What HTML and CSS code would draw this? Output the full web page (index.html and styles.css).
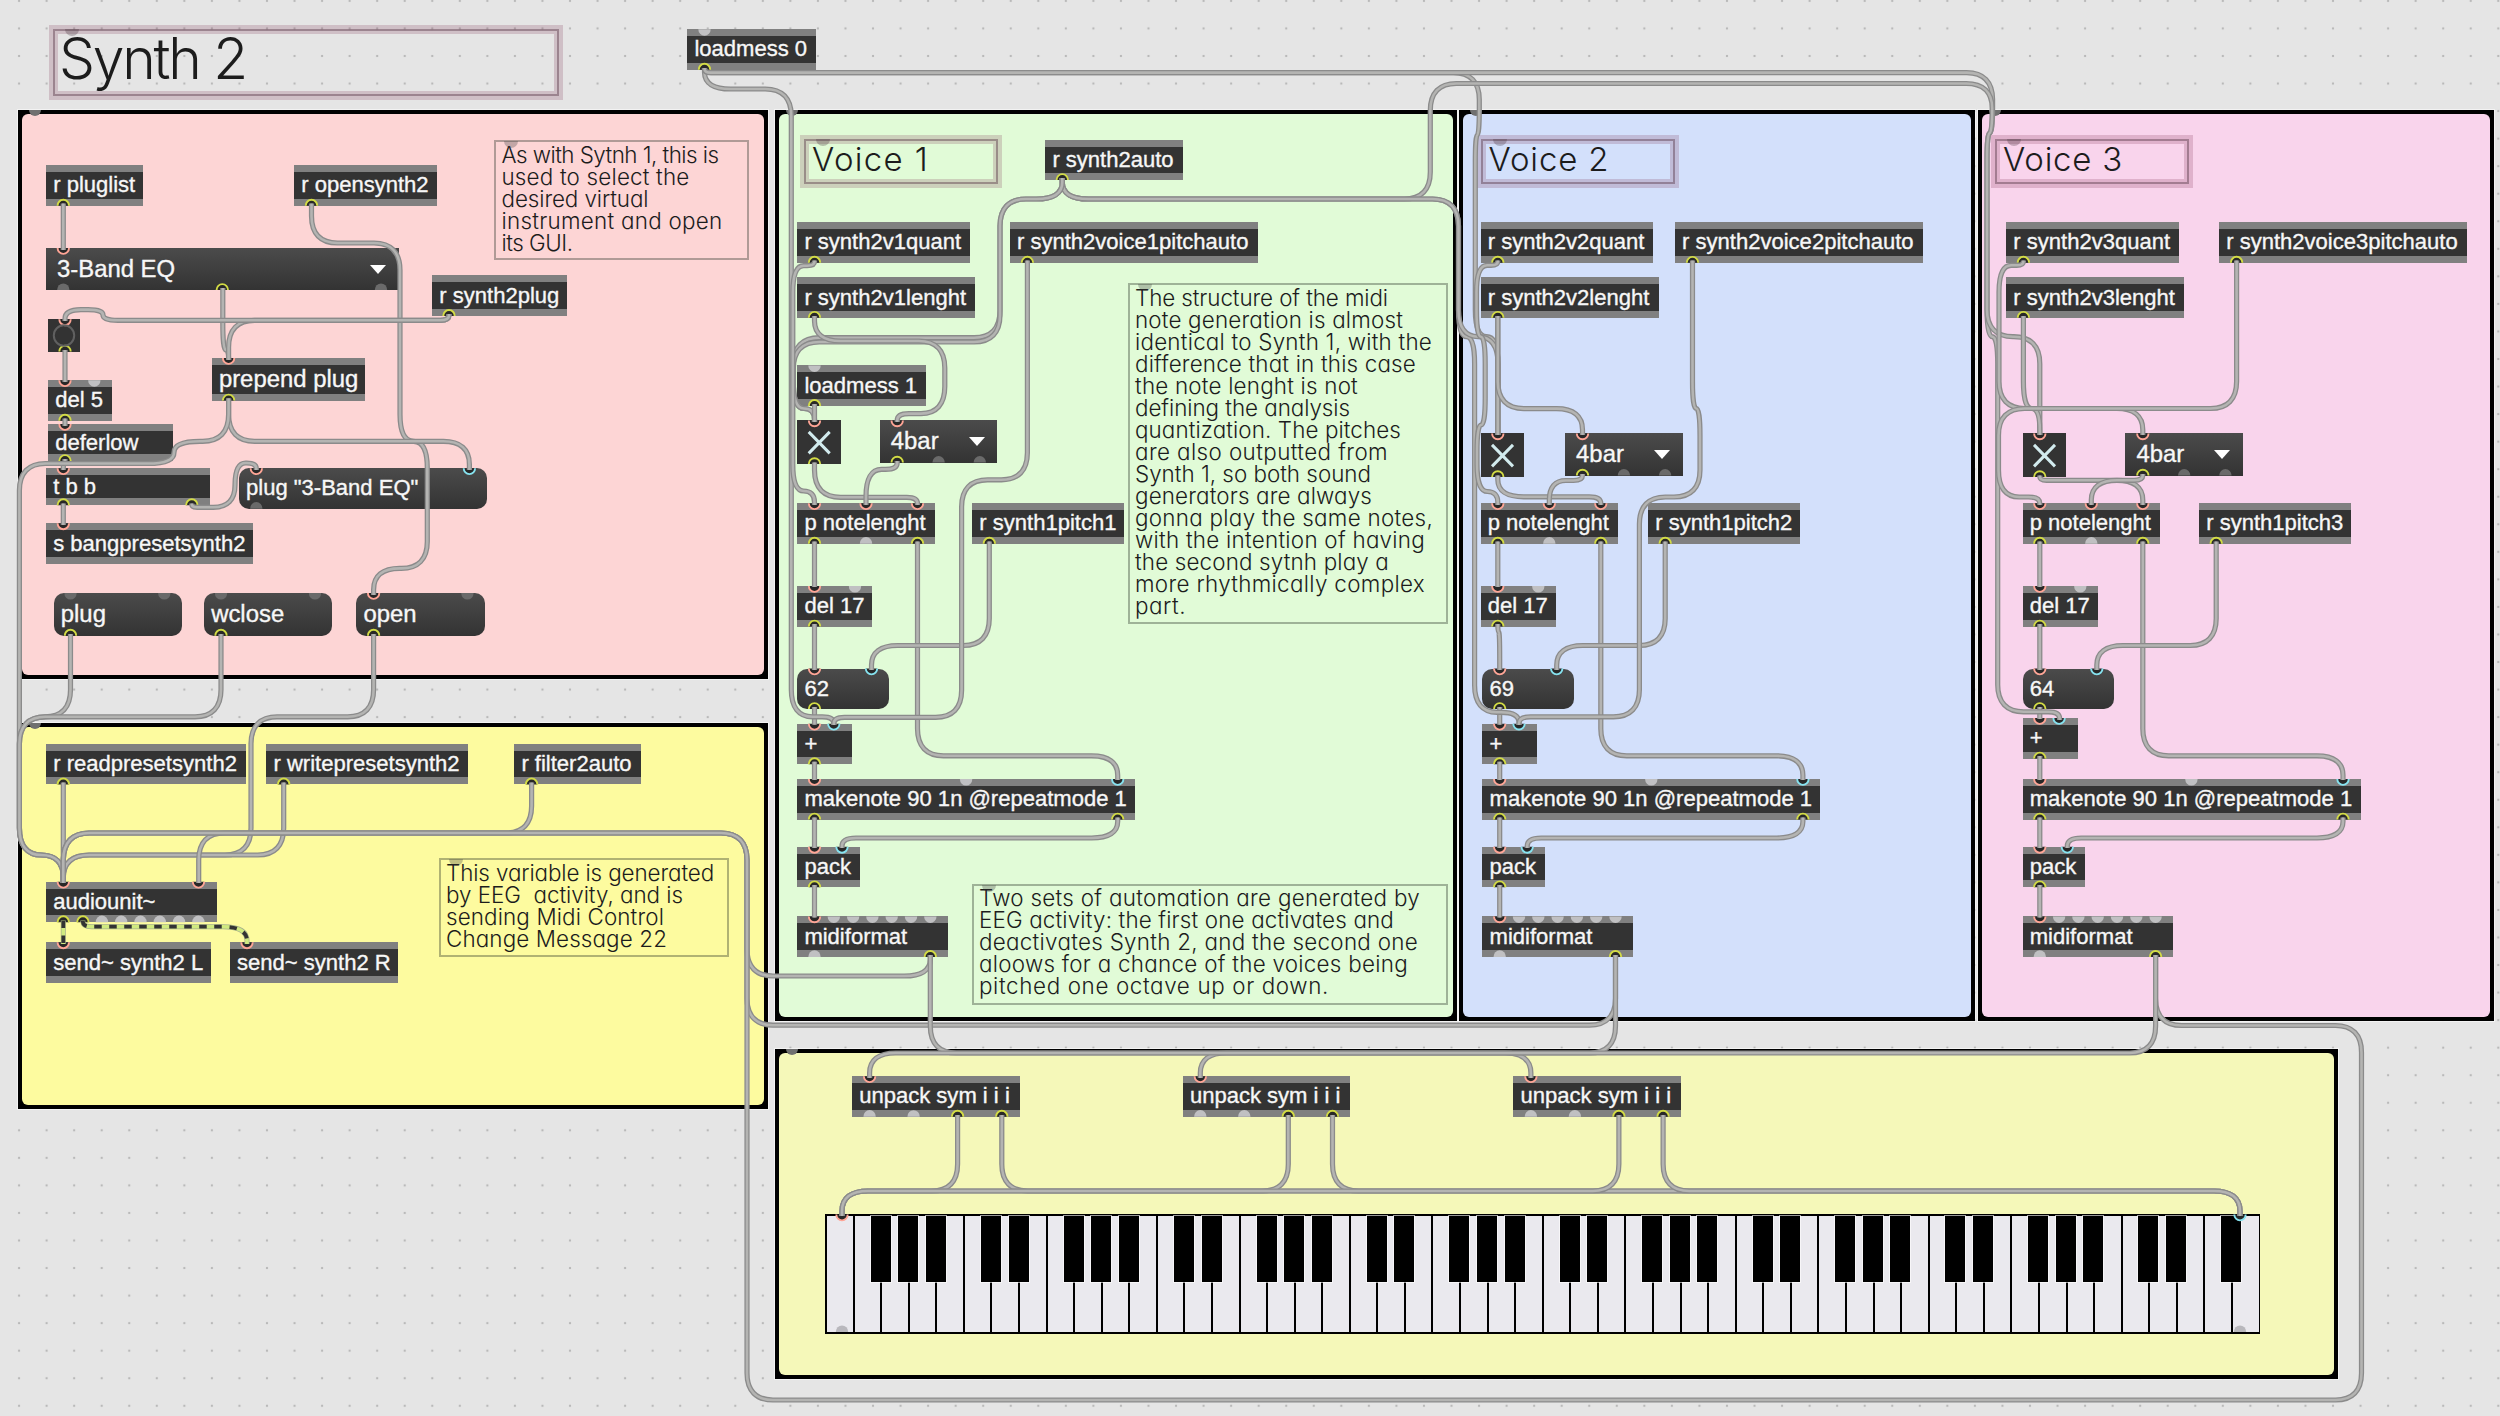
FILE: index.html
```html
<!DOCTYPE html>
<html lang="en">
<head>
<meta charset="utf-8">
<title>Synth 2</title>
<link rel="stylesheet" href="styles.css">
</head>
<body>
<main class="canvas">
  <section class="panel panel-plugin"></section>
  <section class="panel panel-audio"></section>
  <section class="panel panel-voice1"></section>
  <section class="panel panel-voice2"></section>
  <section class="panel panel-voice3"></section>
  <section class="panel panel-keys"></section>

  <h1 class="title title-main"><span data-fit="187">Synth 2</span></h1>
  <h2 class="title title-v1"><span data-fit="117">Voice 1</span></h2>
  <h2 class="title title-v2"><span data-fit="121">Voice 2</span></h2>
  <h2 class="title title-v3"><span data-fit="120">Voice 3</span></h2>

  <p class="note note-plugin">
    <span data-fit="217">As with Sytnh 1, this is</span>
    <span data-fit="188">used to select the</span>
    <span data-fit="147">desired virtual</span>
    <span data-fit="221">instrument and open</span>
    <span data-fit="71">its GUI.</span>
  </p>
  <p class="note note-variable">
    <span data-fit="268">This variable is generated</span>
    <span data-fit="237">by EEG  activity, and is</span>
    <span data-fit="218">sending Midi Control</span>
    <span data-fit="221">Change Message 22</span>
  </p>
  <p class="note note-structure">
    <span data-fit="253">The structure of the midi</span>
    <span data-fit="268">note generation is almost</span>
    <span data-fit="297">identical to Synth 1, with the</span>
    <span data-fit="281">difference that in this case</span>
    <span data-fit="223">the note lenght is not</span>
    <span data-fit="215">defining the analysis</span>
    <span data-fit="266">quantization. The pitches</span>
    <span data-fit="253">are also outputted from</span>
    <span data-fit="236">Synth 1, so both sound</span>
    <span data-fit="237">generators are always</span>
    <span data-fit="298">gonna play the same notes,</span>
    <span data-fit="290">with the intention of having</span>
    <span data-fit="254">the second sytnh play a</span>
    <span data-fit="290">more rhythmically complex</span>
    <span data-fit="51">part.</span>
  </p>
  <p class="note note-automation">
    <span data-fit="441">Two sets of automation are generated by</span>
    <span data-fit="415">EEG activity: the first one activates and</span>
    <span data-fit="439">deactivates Synth 2, and the second one</span>
    <span data-fit="429">aloows for a chance of the voices being</span>
    <span data-fit="350">pitched one octave up or down.</span>
  </p>

  <div class="keyboard" id="keyboard"></div>
  <div id="objects"></div>
  <svg class="overlay" id="overlay" width="2500" height="1416" viewBox="0 0 2500 1416"></svg>
</main>
<script src="patch.js"></script>
</body>
</html>
```

FILE: styles.css
```css
* { box-sizing: border-box; }

body {
  margin: 0;
  background: #e5e5e5;
  overflow: hidden;
}

.canvas {
  position: relative;
  width: 2500px;
  height: 1416px;
  overflow: hidden;
  font-family: "Liberation Sans", Arial, sans-serif;
  background-color: #e5e5e5;
  background-image: radial-gradient(circle at center, #b9b9b9 0.9px, rgba(185, 185, 185, 0) 1.6px);
  background-size: 27.56px 27.55px;
  background-position: 5.3px -12.9px;
}

/* Coloured panels */
.panel {
  position: absolute;
  border: 4px solid #000;
  background: #000;
  box-shadow: 0 0 0 1px rgba(255, 255, 255, 0.55);
}
.panel::before {
  content: "";
  position: absolute;
  inset: 0;
  border-radius: 6px;
  background: var(--fill);
}
.panel::after {
  content: "";
  position: absolute;
  left: 7px;
  top: -4px;
  width: 12px;
  height: 6px;
  border-radius: 0 0 6px 6px;
  background: #707070;
}
.panel-plugin { left: 18px; top: 110px; width: 750px; height: 569px; --fill: #fdd5d5; }
.panel-audio  { left: 18px; top: 723px; width: 750px; height: 386px; --fill: #fdfb9f; }
.panel-voice1 { left: 775px; top: 110px; width: 682px; height: 911px; --fill: #e1fbd7; }
.panel-voice2 { left: 1459px; top: 110px; width: 516px; height: 911px; --fill: #d3e0fb; }
.panel-voice3 { left: 1978px; top: 110px; width: 516px; height: 911px; --fill: #f9d4ec; }
.panel-keys   { left: 775px; top: 1049px; width: 1563px; height: 330px; --fill: #f5f8b9; }

/* Framed headings */
.title {
  position: absolute;
  margin: 0;
  padding: 0 0 0 3px;
  height: 53px;
  width: 202px;
  border: 9px solid rgba(120, 40, 75, 0.2);
  font: 350 33px/31px Inter, Lato, sans-serif;
  font-feature-settings: "cv11";
  color: #1c1c1c;
  white-space: pre;
}
.title::before {
  content: "";
  position: absolute;
  inset: -5px;
  border: 2px solid rgba(90, 60, 75, 0.45);
}
.title::after,
.note::after {
  content: "";
  position: absolute;
  left: 7px;
  top: -5px;
  width: 14px;
  height: 7px;
  border-radius: 0 0 7px 7px;
  background: rgba(70, 50, 60, 0.3);
}
.title-main {
  left: 49px; top: 25px; width: 513.5px; height: 75px;
  padding-left: 1px;
  font-size: 57px; line-height: 50px;
}
.title-v1 { left: 800px; top: 135px; }
.title-v2 { left: 1476.5px; top: 135px; }
.title-v3 { left: 1991px; top: 135px; }

/* Comment boxes */
.note {
  position: absolute;
  margin: 0;
  padding: 1.5px 0 0 5.5px;
  border: 2px solid rgba(40, 50, 40, 0.36);
  font: 350 22.4px/22.07px Inter, Lato, sans-serif;
  font-feature-settings: "cv11";
  color: #1c1c1c;
}
.note span {
  display: block;
  width: max-content;
  white-space: pre;
}
.note::after { left: 8px; top: -1px; background: rgba(60, 60, 60, 0.3); }
.note-plugin     { left: 494px; top: 140px; width: 255px; height: 120px; }
.note-variable   { left: 438.5px; top: 858px; width: 290.5px; height: 99px; }
.note-structure  { left: 1127.5px; top: 283px; width: 320px; height: 341px; }
.note-automation { left: 971.5px; top: 883.5px; width: 476px; height: 121px; }

/* Patch objects */
.obj {
  position: absolute;
  display: flex;
  align-items: center;
  padding: 0 0 0 7.2px;
  height: 40.5px;
  background: #333;
  border: solid #808080;
  border-width: 7.5px 0;
  color: #f7f7f7;
  font-size: 22.04px;
  line-height: 24px;
  white-space: pre;
  -webkit-text-stroke: 0.35px #f7f7f7;
}
.obj.large { font-size: 23.88px; }
.obj.message,
.obj.menu {
  border: 0;
  background: linear-gradient(#4b4b4b, #333);
}
.obj.message { border-radius: 10px; }
.obj.menu { padding-left: 11px; }
.obj.menu::after {
  content: "";
  position: absolute;
  right: 12.5px;
  top: 16.5px;
  border: 8.5px solid transparent;
  border-top: 9px solid #fff;
  border-bottom: 0;
}
.obj.control { border: 0; }

/* Keyboard */
.keyboard {
  position: absolute;
  left: 825px;
  top: 1214px;
  width: 1434.5px;
  height: 120px;
  border: 1px solid #000;
  border-width: 2px 1px 2px 0;
  background: #000;
}
.white-keys {
  display: grid;
  grid-template-columns: repeat(52, 1fr);
  height: 100%;
}
.white-key {
  background: #eae9ee;
  border-left: 2px solid #000;
}
.black-key {
  position: absolute;
  top: 0;
  width: 20px;
  height: 66px;
  background: #000;
  box-shadow: 0 0 0 1px rgba(255, 255, 255, 0.6);
}

/* Cords and ports */
.overlay { position: absolute; left: 0; top: 0; }
.cord { fill: none; stroke-linejoin: round; }
.cord-edge { stroke: #8b8b8b; stroke-width: 5.2; }
.cord-core { stroke: #b4b4b2; stroke-width: 2.6; }
.cord-signal-edge { stroke: #a4b08c; stroke-width: 5; }
.cord-signal { stroke: #d0ea80; stroke-width: 3.6; }
.cord-signal-dash { stroke: #333; stroke-width: 3.8; stroke-dasharray: 7.5 7.5; }
.port { stroke-width: 1.9; fill: #282828; }
.port-hot { stroke: #ffa596; }
.port-cold { stroke: #86e3f0; }
.port-out { stroke: #d3dc45; }
.port-idle { fill: #c0c0c2; }
.port-dim { fill: #6a6a6a; }
.port-key { fill: #b9b8bd; }
.bang-ring { fill: none; stroke: #606060; stroke-width: 2; }
.toggle-cross { fill: none; stroke: #d2ebee; stroke-width: 3; }
```

FILE: patch.js
```javascript
const SVG = 'http://www.w3.org/2000/svg';
const overlay = document.getElementById('overlay');
const objects = document.getElementById('objects');

function shape(tag, cls, attrs) {
  const el = document.createElementNS(SVG, tag);
  el.setAttribute('class', cls);
  for (const k in attrs) el.setAttribute(k, attrs[k]);
  overlay.appendChild(el);
}

// Half-disc port on an object's edge: dir 1 hangs from the top, -1 rises from the bottom.
function port(x, y, dir, kind) {
  const plain = ['idle', 'dim', 'key'].includes(kind);
  const r = plain ? 6.2 : 5.7;
  const h = plain ? 6.6 : 5.9;
  shape('path', plain ? 'port-' + kind : 'port port-' + kind,
    { d: `M${x - r},${y} A${r},${h} 0 0 ${dir > 0 ? 0 : 1} ${x + r},${y}` });
}

// Ports are [x, kind]: h hot inlet, c cold inlet, o connected outlet, - unconnected, d dim on dark
const KINDS = { h: 'hot', c: 'cold', o: 'out', '-': 'idle', d: 'dim' };
function obj(text, x, right, y, ins = [], outs = [], cls = '', h = 40.5) {
  const el = document.createElement('div');
  el.className = ('obj ' + cls).trim();
  el.textContent = text;
  el.style.cssText = `left:${x}px;top:${y}px;width:${right - x}px;height:${h}px`;
  objects.appendChild(el);
  ins.forEach(p => port(p[0], y, 1, KINDS[p[1]]));
  outs.forEach(p => port(p[0], y + h, -1, KINDS[p[1]]));
}

function toggle(x, y, inX) {
  obj('', x, x + 43.8, y, [[inX, 'h']], [[inX, 'o']], 'control', 43.7);
  const l = x + 11.5, t = y + 11.5;
  shape('path', 'toggle-cross', { d: `M${l},${t} l21,21.5 M${l + 21},${t} l-21,21.5` });
}

// Cord through alternating vertical/horizontal runs, with eased corners.
function roundedPath(x, y, runs) {
  const pts = [[x, y]];
  runs.forEach((v, i) => {
    const [px, py] = pts[pts.length - 1];
    pts.push(i % 2 ? [v, py] : [px, v]);
  });
  const len = (a, b) => Math.abs(a[0] - b[0]) + Math.abs(a[1] - b[1]);
  let d = `M${x},${y}`;
  for (let i = 1; i < pts.length - 1; i++) {
    const a = pts[i - 1], c = pts[i], b = pts[i + 1];
    const vertFirst = i % 2 === 1;
    const v = vertFirst ? len(a, c) : len(c, b);
    const hz = vertFirst ? len(c, b) : len(a, c);
    const atEnd = i === 1 || i === pts.length - 2;
    const rx = Math.min(26, hz / 2, v * 1.4);
    const ry = Math.min(27, v * (atEnd ? 0.8 : 0.5));
    const ra = vertFirst ? ry : rx, rb = vertFirst ? rx : ry;
    const toward = (p, r) => {
      const l = len(c, p) || 1;
      return [c[0] + (p[0] - c[0]) * r / l, c[1] + (p[1] - c[1]) * r / l];
    };
    const s = toward(a, ra), s2 = toward(a, ra * 0.35), e2 = toward(b, rb * 0.35), e = toward(b, rb);
    d += ` L${s} C${s2} ${e2} ${e}`;
  }
  return d + ` L${pts[pts.length - 1]}`;
}

function cord(x, y, ...runs) {
  const d = roundedPath(x, y, runs);
  shape('path', 'cord cord-edge', { d });
  shape('path', 'cord cord-core', { d });
}

function signal(x, y, ...runs) {
  const d = roundedPath(x, y, runs);
  ['cord-signal-edge', 'cord-signal', 'cord-signal-dash'].forEach(c => shape('path', 'cord ' + c, { d }));
}

// Objects: plug-in panel
obj('loadmess 0', 687.2, 815.6, 29.2, [[704.5, '-']], [[704.5, 'o']]);
obj('r pluglist', 46, 143, 165.2, [], [[63.3, 'o']]);
obj('r opensynth2', 294, 437.2, 165.2, [], [[311.5, 'o']]);
obj('3-Band EQ', 46, 398.5, 248, [[63.3, 'h']], [[63.3, 'd'], [222.3, 'o'], [381, 'd']], 'menu large', 42);
obj('r synth2plug', 432.1, 567.3, 275.4, [], [[449, 'o']]);
obj('', 48, 80.2, 319.3, [[65, 'h']], [[65, 'o']], 'control', 32.3);
shape('circle', 'bang-ring', { cx: 64, cy: 335.5, r: 10.2 });
obj('prepend plug', 211.7, 365.3, 358, [[228.6, 'h']], [[228.6, 'o']], 'large', 42.5);
obj('del 5', 48, 112.2, 380.2, [[65, 'h'], [94.3, '-']], [[65, 'o']]);
obj('deferlow', 48, 172.5, 424, [[65, 'h']], [[65, 'o']], '', 37);
obj('t b b', 46, 209.5, 468.2, [[63.3, 'h']], [[63.3, 'o'], [191.8, 'o']], '', 37);
obj('plug "3-Band EQ"', 238.8, 486.7, 468.2, [[256.3, 'h'], [469.4, 'c']], [[256.3, 'd']], 'message');
obj('s bangpresetsynth2', 46, 253.4, 523.3, [[63.3, 'h']]);
obj('plug', 53.6, 181.8, 593, [[70.5, 'd'], [164.3, 'd']], [[70.5, 'o']], 'message large', 42.7);
obj('wclose', 204, 332.4, 593, [[221, 'd'], [315, 'd']], [[221, 'o']], 'message large', 42.7);
obj('open', 356.2, 485, 593, [[373.6, 'h'], [467.4, 'd']], [[373.6, 'o']], 'message large', 42.7);

// Objects: audio panel
obj('r readpresetsynth2', 46, 246, 743.9, [], [[63.3, 'o']]);
obj('r writepresetsynth2', 266.3, 468, 743.9, [], [[283.7, 'o']]);
obj('r filter2auto', 514.2, 640.8, 743.9, [], [[531.6, 'o']]);
obj('audiounit~', 46, 216.6, 881.7, [[63.3, 'h'], [198.5, 'h']],
  [[63.3, 'o'], [82.9, 'o'], [101.9, '-'], [121.2, '-'], [140.5, '-'], [159.8, '-'], [179, '-'], [198.4, '-']]);
obj('send~ synth2 L', 46, 211.2, 942.3, [[63.3, 'h']]);
obj('send~ synth2 R', 229.8, 398.5, 942.3, [[247, 'h']]);

// Objects: receivers above the voices
obj('r synth2auto', 1045.2, 1182.8, 139.5, [], [[1062.3, 'o']]);
[
  [1, 797.2, 969.8, 975, 1009.8],
  [2, 1480.5, 1653, 1659, 1674.9],
  [3, 2006.1, 2178.6, 2184, 2219],
].forEach(([n, x, quantRight, lenRight, pitchX]) => {
  obj(`r synth2v${n}quant`, x, quantRight, 222.2, [], [[x + 17.3, 'o']]);
  obj(`r synth2v${n}lenght`, x, lenRight, 277.3, [], [[x + 17.3, 'o']]);
  obj(`r synth2voice${n}pitchauto`, pitchX, pitchX + 248.2, 222.2, [], [[pitchX + 17.6, 'o']]);
});
obj('loadmess 1', 797.2, 926.2, 365.4, [[814.5, '-']], [[814.5, 'o']]);

// One voice: a is the left edge of the upper objects, b that of the lower ones
function voice(n, a, b, note, menuX, pitchX, toggleY, plusY) {
  const u = a + 17.3, l = b + 17.3;
  toggle(a, toggleY, u);
  obj('4bar', menuX, menuX + 117.5, toggleY, [[menuX + 17.4, 'h']],
    [[menuX + 17.4, 'o'], [menuX + 58.8, 'd'], [menuX + 100, 'd']], 'menu large', 42.2);
  obj('p notelenght', a, a + 137.7, 503.2, [[u, 'h'], [u + 51.5, 'h'], [u + 103, 'h']],
    [[u, 'o'], [u + 51.5, '-'], [u + 103, 'o']]);
  obj(`r synth1pitch${n}`, pitchX, pitchX + 152, 503.2, [], [[pitchX + 17.2, 'o']]);
  obj('del 17', a, a + 75.2, 586, [[u, 'h'], [u + 40.5, '-']], [[u, 'o']]);
  obj(note, b, b + 91.6, 668.5, [[l, 'h'], [l + 57, 'c']], [[l, 'o']], 'message');
  obj('+', b, b + 55, plusY, [[l, 'h'], [l + 19.3, 'c']], [[l, 'o']]);
  obj('makenote 90 1n @repeatmode 1', b, b + 338, 779, [[l, 'h'], [l + 151.6, '-'], [l + 303.2, 'c']],
    [[l, 'o'], [l + 303.2, 'o']]);
  obj('pack', b, b + 62.4, 846.8, [[l, 'h'], [l + 27.5, 'c']], [[l, 'o']]);
  obj('midiformat', b, b + 150.5, 916.4,
    [[l, 'h'], ...[1, 2, 3, 4, 5, 6].map(i => [l + i * 19.3, '-'])], [[l, '-'], [l + 115.8, 'o']]);

  if (u === l) cord(u, 624, 670);
  else cord(u, 624, 632, l, 670);
  cord(u, 541.5, 587);
  cord(l, 707, plusY + 1);
  cord(l, plusY + 38, 780);
  cord(l, 817.5, 848);
  cord(l, 885, 917.5);
  cord(u + 103, 541.5, 755.8, l + 303.2, 780);
  cord(l + 303.2, 817.5, 838, l + 27.5, 848);
  cord(pitchX + 17.2, 541.5, 645.5, l + 57, 670);
}
voice(1, 797.2, 797.2, '62', 879.8, 972.1, 420.4, 723.7);
voice(2, 1480.5, 1482.4, '69', 1565.1, 1648, 433.4, 723.7);
voice(3, 2022.5, 2022.5, '64', 2125.4, 2199, 433.4, 718);

// Keyboard
const keyboard = document.getElementById('keyboard');
const whites = document.createElement('div');
whites.className = 'white-keys';
for (let i = 0; i < 52; i++) {
  const key = document.createElement('div');
  key.className = 'white-key';
  whites.appendChild(key);
}
keyboard.appendChild(whites);
for (let i = 2; i < 52; i++) {
  if (![2, 3, 4, 6, 0].includes(i % 7)) continue;
  const key = document.createElement('div');
  key.className = 'black-key';
  key.style.left = (i * 27.55 - 9.2) + 'px';
  keyboard.appendChild(key);
}
port(842, 1214.5, 1, 'hot');
port(2240, 1214.5, 1, 'cold');
port(842, 1332, -1, 'key');
port(2240, 1332, -1, 'key');
[0, 330.7, 661.3].forEach(dx => {
  obj('unpack sym i i i', 852 + dx, 1019.5 + dx, 1076.2, [[869.6 + dx, 'h']],
    [[869.6 + dx, '-'], [913.6 + dx, '-'], [957.6 + dx, 'o'], [1001.8 + dx, 'o']]);
  cord(957.6 + dx, 1115, 1191, 842, 1216);
  cord(1001.8 + dx, 1115, 1191, 2240, 1216);
});

// Cords: plug-in and audio panels
cord(63.3, 203.5, 250);
cord(311.5, 203.5, 243, 400, 441.3, 427.3, 568.4, 373.6, 595);
cord(222.8, 288, 350, 228.6, 360);
cord(449, 314, 320.3, 228.6, 360);
cord(449, 314, 320.3, 103, 309.6, 65, 321);
cord(65, 350, 382);
cord(65, 418.5, 426);
cord(65, 459, 464, 63.3, 470);
cord(63.3, 503.5, 525);
cord(191.8, 503.5, 507.3, 235, 463, 256.3, 470);
cord(228.6, 398.5, 441.3, 469.4, 470);
cord(228.6, 398.5, 441.3, 174, 463.5, 19.4, 855, 63.3, 883);
cord(70.5, 634, 716.8, 19.4, 855, 63.3, 883);
cord(221, 634, 716.8, 19.4, 855, 63.3, 883);
cord(373.6, 634, 716.8, 251, 855, 63.3, 883);
cord(63.3, 782.5, 883);
cord(283.7, 782.5, 855, 63.3, 883);
cord(531.6, 782.5, 833, 198.7, 883);
signal(63.3, 920.5, 944);
signal(82.9, 920.5, 926.7, 247, 944);

// Cords: loadmess and automation
cord(704.5, 68, 89, 791.3, 716.8, 833.8, 725);
cord(704.5, 68, 72.6, 1479.3, 135, 1475.3, 336.7, 1498, 435);
cord(704.5, 68, 72.6, 1992.6, 133, 1987, 336.7, 1997.7, 711.8, 2059.6, 720);
cord(1062.3, 178, 199, 1430.3, 83.5, 1992.2, 133, 1987, 336.7, 2039.8, 435);
cord(1062.3, 178, 199, 1458.5, 336.7, 1474.6, 712.3, 1519, 725);
cord(1062.3, 178, 199, 1458.5, 336.7, 1498, 435);
cord(1062.3, 178, 199, 1000, 337.7, 793.3, 408.5, 814.5, 422);
cord(1062.3, 178, 199, 1000, 342, 793.3, 408.5, 814.5, 422);

// Cords: voice 1
cord(814.5, 260.5, 265.7, 792.8, 491, 814.5, 505);
cord(814.5, 316, 341, 944.8, 413.6, 897.2, 422);
cord(814.5, 404, 422);
cord(1027.4, 260.5, 479.8, 961.6, 717.3, 833.8, 725);
cord(814.5, 462.5, 497.3, 917.5, 505);
cord(897.2, 461, 469.3, 866, 505);

// Cords: voice 2
cord(1497.8, 260.5, 265.3, 1476.5, 336.7, 1485.2, 425, 1477, 491.5, 1497.8, 505);
cord(1497.8, 316, 435);
cord(1497.8, 316, 408.6, 1582.5, 435);
cord(1692.5, 260.5, 408.5, 1700, 497, 1639.4, 716.8, 1519, 725);
cord(1497.8, 475.5, 496.8, 1600.8, 505);
cord(1582.5, 474, 480.5, 1549.3, 505);

// Cords: voice 3
cord(2023.4, 260.5, 265.3, 1999, 408.5, 2142.8, 435);
cord(2023.4, 316, 408.5, 2039.8, 435);
cord(2236.6, 260.5, 408.5, 1998.5, 497, 2039.8, 505);
cord(2039.8, 475.5, 480.3, 2142.8, 505);
cord(2142.8, 474, 480.3, 2091.3, 505);

// Cords: midi output
cord(930.3, 955, 976, 747, 833, 63.3, 883);
cord(1615.5, 955, 1025.2, 747, 833, 63.3, 883);
cord(2155.6, 955, 1025.5, 2361.5, 1400, 747, 833, 63.3, 883);
cord(930.3, 955, 1053, 1530.9, 1078);
cord(1615.5, 955, 1053, 1200.3, 1078);
cord(2155.6, 955, 1053, 869.6, 1078);

// Track each comment line out to its measured width
document.querySelectorAll('[data-fit]').forEach(el => {
  const natural = el.getBoundingClientRect().width;
  el.style.letterSpacing = ((el.dataset.fit - natural) / el.textContent.length).toFixed(3) + 'px';
});
```
